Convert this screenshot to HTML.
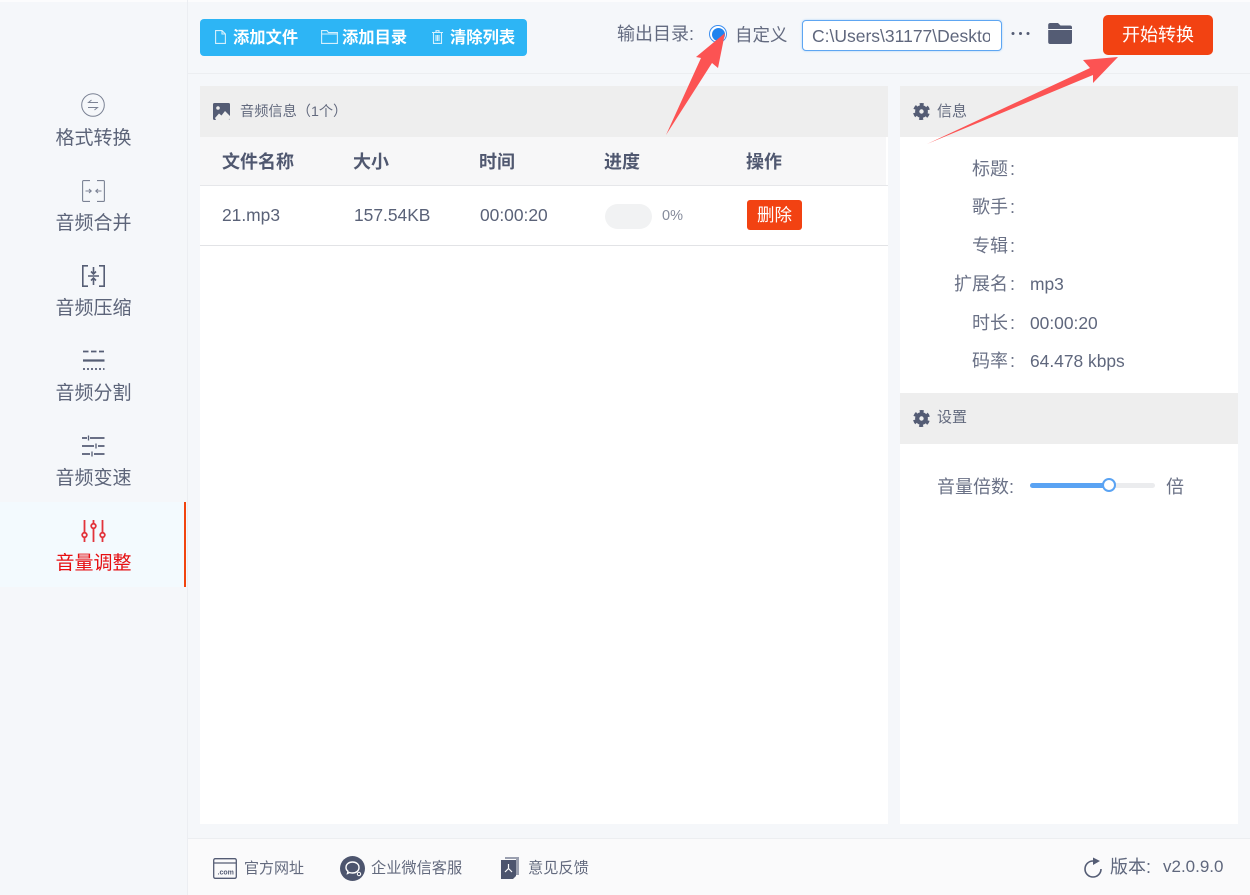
<!DOCTYPE html>
<html lang="zh">
<head>
<meta charset="utf-8">
<title>音量调整</title>
<style>
html,body{margin:0;padding:0;width:1250px;height:895px;overflow:hidden;background:#f5f7fa;}
body{position:relative;font-family:"Liberation Sans","Noto Sans CJK SC",sans-serif;color:#545c74;}
.b{position:absolute;}
.t{position:absolute;white-space:nowrap;line-height:20px;height:20px;}
svg{position:absolute;overflow:visible;}
.nav{font-size:19px;left:0;width:187px;text-align:center;color:#5c6479;}
.sm{font-size:15px;color:#636a7e;}
.h{font-size:18px;font-weight:700;color:#505870;}
.c{font-size:17.4px;color:#5a6278;}
.lab{font-size:18px;color:#6a7186;text-align:right;width:100px;left:915px;}
.lab span{margin-left:2px;}
.val{font-size:17.4px;color:#5f677d;left:1030px;}
.w{color:#fff;font-size:16.3px;font-weight:700;}
</style>
</head>
<body>
<div class="b" style="left:0;top:0;width:1250px;height:2px;background:#fcfcfd"></div>
<!-- sidebar -->
<div class="b" style="left:187px;top:0;width:1px;height:895px;background:#eceef2"></div>
<div class="b" style="left:0;top:502px;width:187px;height:85px;background:#f3fafe"></div>
<div class="b" style="left:184px;top:502px;width:2px;height:85px;background:#f1440f"></div>

<svg style="left:81px;top:93px" width="24" height="24" fill="none" stroke="#7b8294" stroke-width="1"><circle cx="12" cy="12" r="11.3"/><path d="M17 9.500H7.500l3-2.500M7 14.500h9.500l-3 2.500"/></svg>
<div class="t nav" style="top:129px">格式转换</div>

<svg style="left:82px;top:180px" width="23" height="22" fill="none" stroke="#7b8294" stroke-width="1.100"><path d="M8 .6H1.500a.9.9 0 0 0-.9.9v19a.9.9 0 0 0 .9.9H8M15 .6h6.500a.9.9 0 0 1 .9.9v19a.9.9 0 0 1-.9.9H15M3.500 11H9M7 9l2.200 2L7 13M19.500 11H14M16 9l-2.200 2 2.200 2"/></svg>
<div class="t nav" style="top:214px">音频合并</div>

<svg style="left:82px;top:265px" width="23" height="22" fill="none" stroke="#565e75" stroke-width="1.600"><path d="M6 .8H.8v20.400H6M17 .8h5.200v20.400H17M6 11h11M11.500 2v6.500M9 6.500l2.500 2.500L14 6.500M11.500 20v-6.500M9 15.500l2.500-2.500 2.500 2.500"/></svg>
<div class="t nav" style="top:299px">音频压缩</div>

<svg style="left:82px;top:350px" width="23" height="21" fill="none" stroke="#565e75"><path stroke-width="1.700" d="M1 1.500h5.500M9 1.500h5.500M17 1.500h5"/><path stroke-width="2.200" d="M1 10.500h21.500"/><path stroke-width="1.700" stroke-dasharray="2 2" d="M1 19h21.500"/></svg>
<div class="t nav" style="top:384px">音频分割</div>

<svg style="left:82px;top:435px" width="23" height="22" fill="none" stroke="#565e75" stroke-width="1.800"><path d="M0 3h5M8 3h14.500M0 11h12M16 11h6.500M0 19h8M12 19h10.500"/><path stroke-width="1.300" d="M6.500.5v5M14 8.500v5M10 16.500v5"/></svg>
<div class="t nav" style="top:469px">音频变速</div>

<svg style="left:81px;top:519px" width="25" height="24" fill="none" stroke="#e2343b" stroke-width="1.800"><path d="M3.500 1v12.500M3.500 18.500v4.500M12.500 1v3.500M12.500 9.500v13.500M21.500 1v12.500M21.500 18.500v4.500"/><circle cx="3.500" cy="16" r="2.300"/><circle cx="12.500" cy="7" r="2.300"/><circle cx="21.500" cy="16" r="2.300"/></svg>
<div class="t nav" style="top:554px;color:#e60f12">音量调整</div>

<!-- top bar -->
<div class="b" style="left:188px;top:73px;width:1062px;height:1px;background:#eceef1"></div>
<div class="b" style="left:200px;top:19px;width:327px;height:37px;background:#2db5f5;border-radius:4px"></div>
<svg style="left:215px;top:30px" width="11" height="14" fill="none" stroke="#d5f0fd" stroke-width="1.100"><path d="M.6.600h6.400l3.400 3.400v9.400H.6zM7 .6V4h3.400"/></svg>
<div class="t w" style="left:233px;top:28px">添加文件</div>
<svg style="left:321px;top:30px" width="17" height="14" fill="none" stroke="#d5f0fd" stroke-width="1.100"><path d="M.6 13.400V.6h5.400l1.400 2h9v10.800zM.6 4h16"/></svg>
<div class="t w" style="left:342px;top:28px">添加目录</div>
<svg style="left:432px;top:30px" width="11" height="14" fill="none" stroke="#d5f0fd" stroke-width="1.100"><path d="M0 2.500h11M4 2.500V.7h3v1.800M1.500 2.500v10.900h8V2.500M4 5v6M5.500 5v6M7 5v6"/></svg>
<div class="t w" style="left:450px;top:28px">清除列表</div>

<div class="t" style="left:617px;top:24px;font-size:18px;color:#646b80">输出目录:</div>
<div class="b" style="left:709px;top:25px;width:16px;height:16px;border:1.500px solid #3d8ff0;border-radius:50%;background:#fff"></div>
<div class="b" style="left:712px;top:28px;width:13px;height:13px;border-radius:50%;background:#2183ee"></div>
<div class="t" style="left:735px;top:25px;font-size:17.500px;color:#646b80">自定义</div>
<div class="b" style="left:802px;top:20px;width:198px;height:29px;border:1px solid #5ea6f2;border-radius:4px;background:#fff;box-shadow:0 0 2px #a9d0f8;">
<div class="b" style="left:9px;top:0;width:178px;height:29px;overflow:hidden"><div class="t" style="left:0;top:5px;font-size:17.500px;color:#5f677d">C:\Users\31177\Desktop</div></div></div>
<svg style="left:1011px;top:31px" width="19" height="5" fill="#545c74"><circle cx="2" cy="2.500" r="1.500"/><circle cx="9.500" cy="2.500" r="1.500"/><circle cx="17" cy="2.500" r="1.500"/></svg>
<svg style="left:1047.500px;top:23px" width="24" height="22"><path fill="#545c74" d="M2 0h8l2.500 2.500H22a2 2 0 0 1 2 2V6H.2V2a2 2 0 0 1 1.800-2z"/><path fill="#545c74" d="M.2 7h23.800v12a2 2 0 0 1-2 2H2.200a2 2 0 0 1-2-2z"/></svg>
<div class="b" style="left:1103px;top:15px;width:110px;height:40px;background:#f24212;border-radius:5px"></div>
<div class="t" style="left:1103px;width:110px;text-align:center;top:25px;font-size:18px;color:#fff">开始转换</div>

<!-- main panel -->
<div class="b" style="left:200px;top:86px;width:688px;height:738px;background:#fff"></div>
<div class="b" style="left:200px;top:86px;width:688px;height:51px;background:#eeeeee"></div>
<svg style="left:213px;top:103px" width="18" height="17"><rect width="17" height="17" rx="1.500" fill="#545c74"/><circle cx="5" cy="5" r="1.800" fill="#eee"/><path fill="#eee" d="M2 15l4-4.500 2.500 2 3.500-4.500 5 5v2.500a2 2 0 0 1-1.500 1.500H3z"/></svg>
<div class="t sm" style="left:240px;top:102px;font-size:14.200px">音频信息（1个）</div>

<div class="b" style="left:200px;top:137px;width:686px;height:48px;background:#f7f7f8"></div>
<div class="b" style="left:200px;top:185px;width:688px;height:1px;background:#e6e7ea"></div>
<div class="t h" style="left:222px;top:152px">文件名称</div>
<div class="t h" style="left:353px;top:152px">大小</div>
<div class="t h" style="left:479px;top:152px">时间</div>
<div class="t h" style="left:604px;top:152px">进度</div>
<div class="t h" style="left:746px;top:152px">操作</div>

<div class="t c" style="left:222px;top:205px">21.mp3</div>
<div class="t c" style="left:354px;top:205px">157.54KB</div>
<div class="t c" style="left:480px;top:205px">00:00:20</div>
<div class="b" style="left:605px;top:204px;width:47px;height:25px;border-radius:12.500px;background:#f1f2f3"></div>
<div class="t" style="left:662px;top:206px;font-size:14.500px;color:#858b9b">0%</div>
<div class="b" style="left:747px;top:200px;width:55px;height:30px;background:#f24212;border-radius:3px"></div>
<div class="t" style="left:747px;width:55px;text-align:center;top:205px;font-size:17.500px;color:#fff">删除</div>
<div class="b" style="left:200px;top:245px;width:688px;height:1px;background:#e2e3e6"></div>

<!-- right panel -->
<div class="b" style="left:900px;top:86px;width:338px;height:738px;background:#fff"></div>
<div class="b" style="left:900px;top:86px;width:338px;height:51px;background:#eeeeee"></div>
<svg style="left:913px;top:103px" width="17" height="17" viewBox="0 0 17 17"><g fill="none" stroke="#545c74"><circle cx="8.500" cy="8.500" r="4.300" stroke-width="4.200"/><circle cx="8.500" cy="8.500" r="7.200" stroke-width="2.600" stroke-dasharray="3.900 3.640" transform="rotate(-104 8.500 8.500)"/></g></svg>
<div class="t sm" style="left:937px;top:102px">信息</div>

<div class="t lab" style="top:159px">标题<span>:</span></div>
<div class="t lab" style="top:197px">歌手<span>:</span></div>
<div class="t lab" style="top:236px">专辑<span>:</span></div>
<div class="t lab" style="top:274px">扩展名<span>:</span></div>
<div class="t val" style="top:274px">mp3</div>
<div class="t lab" style="top:313px">时长<span>:</span></div>
<div class="t val" style="top:313px">00:00:20</div>
<div class="t lab" style="top:351px">码率<span>:</span></div>
<div class="t val" style="top:351px">64.478 kbps</div>

<div class="b" style="left:900px;top:393px;width:338px;height:51px;background:#eeeeee"></div>
<svg style="left:913px;top:410px" width="17" height="17" viewBox="0 0 17 17"><g fill="none" stroke="#545c74"><circle cx="8.500" cy="8.500" r="4.300" stroke-width="4.200"/><circle cx="8.500" cy="8.500" r="7.200" stroke-width="2.600" stroke-dasharray="3.900 3.640" transform="rotate(-104 8.500 8.500)"/></g></svg>
<div class="t sm" style="left:937px;top:408px">设置</div>

<div class="t" style="left:937px;top:477px;font-size:18px;color:#6a7186">音量倍数:</div>
<div class="b" style="left:1030px;top:483px;width:125px;height:5px;background:#ebecee;border-radius:3px"></div>
<div class="b" style="left:1030px;top:483px;width:80px;height:5px;background:#5aa3f3;border-radius:3px"></div>
<div class="b" style="left:1102px;top:478px;width:10px;height:10px;border:2.500px solid #5aa3f3;border-radius:50%;background:#fff"></div>
<div class="t" style="left:1166px;top:477px;font-size:18px;color:#6a7186">倍</div>

<!-- footer -->
<div class="b" style="left:188px;top:838px;width:1062px;height:57px;background:#fafafb"></div>
<div class="b" style="left:188px;top:838px;width:1062px;height:1px;background:#eceef1"></div>
<svg style="left:213px;top:858px" width="24" height="21" fill="none" stroke="#545c74"><rect x=".7" y=".7" width="22.600" height="19.600" rx="1.500" stroke-width="1.300"/><path stroke-width="1.300" d="M1 5h22"/><text x="4.500" y="16.500" font-size="7" font-weight="700" fill="#545c74" stroke="none" font-family="Liberation Sans">.com</text></svg>
<div class="t sm" style="left:244px;top:859px">官方网址</div>
<svg style="left:340px;top:856px" width="25" height="25"><circle cx="12.500" cy="12.500" r="12.500" fill="#4d556e"/><path fill="none" stroke="#fff" stroke-width="1.400" d="M6 11.500c0-3.500 3-5.500 6.500-5.500s6.500 2 6.500 5.500-3 5.500-6.500 5.500c-1 0-2 0-3-.5l-2 1 .5-2.200C6.800 14.400 6 13 6 11.500z"/><circle cx="19" cy="18" r="1.700" fill="none" stroke="#fff" stroke-width="1"/></svg>
<div class="t sm" style="left:371px;top:859px;font-size:15.200px">企业微信客服</div>
<svg style="left:501px;top:857px" width="18" height="23"><path fill="#9a9faf" d="M4 0h14v18h-3V2H4z"/><path fill="#4d556e" d="M0 3h15v16l-3 3H0z"/><path fill="none" stroke="#fff" stroke-width="1.200" d="M7.500 7v4.500L4 15M7.500 11.500L11 15"/></svg>
<div class="t sm" style="left:528px;top:859px;font-size:15.200px">意见反馈</div>
<svg style="left:1083px;top:857px" width="20" height="21" fill="none" stroke="#545c74" stroke-width="1.600"><path d="M10 4a8 8 0 1 0 8 8"/><path fill="#545c74" stroke="none" d="M10 .5l7 3.500-7 4z"/></svg>
<div class="t" style="left:1110px;top:857px;font-size:18px;color:#5f677d">版本:</div>
<div class="t" style="left:1163px;top:857px;font-size:17px;color:#5f677d">v2.0.9.0</div>

<!-- annotation arrows -->
<svg style="left:0;top:0;pointer-events:none" width="1250" height="895">
<polygon fill="#fc5353" points="666,135 701,58 696,57 725,33 718,68 712,63"/>
<polygon fill="#fc5353" points="927,144 1090,68 1083,60 1118,57 1093,83 1093,75"/>
</svg>
</body>
</html>
